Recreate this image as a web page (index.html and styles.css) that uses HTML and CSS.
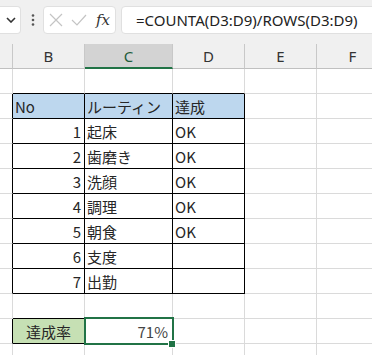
FILE: index.html
```html
<!DOCTYPE html>
<html lang="ja">
<head>
    <meta charset="UTF-8">
    <title>達成率</title>
    <link rel="stylesheet" href="styles.css">
</head>
<body>
    <div class="toolbar">
        <div class="namebox">
            <svg width="10" height="6" viewBox="0 0 10 6"><path d="M1 1l4 4 4-4" fill="none" stroke="#333" stroke-width="1.6"/></svg>
        </div>
        <svg class="dots" width="4" height="12" viewBox="0 0 4 12"><circle cx="2" cy="1.5" r="1.3" fill="#555"/><circle cx="2" cy="6" r="1.3" fill="#555"/><circle cx="2" cy="10.5" r="1.3" fill="#555"/></svg>
        <div class="fxbox">
            <svg width="14" height="14" viewBox="0 0 14 14"><path d="M1 1l12 12M13 1L1 13" stroke="#c4c4c4" stroke-width="1.2"/></svg>
            <svg width="16" height="12" viewBox="0 0 16 12"><path d="M1 6l5 5L15 1" fill="none" stroke="#c4c4c4" stroke-width="1.2"/></svg>
            <span class="fx">fx</span>
        </div>
        <div class="formula">=COUNTA(D3:D9)/ROWS(D3:D9)</div>
    </div>

    <div class="sheet">
        <!-- column headers -->
        <div class="hd"></div>
        <div class="hd">B</div>
        <div class="hd active">C</div>
        <div class="hd">D</div>
        <div class="hd">E</div>
        <div class="hd">F</div>

        <!-- row 1 -->
        <div class="c"></div>
        <div class="c bb"></div>
        <div class="c bb"></div>
        <div class="c bb"></div>
        <div class="c"></div>
        <div class="c"></div>

        <!-- row 2 -->
        <div class="c br"></div>
        <div class="c br bb blue">No</div>
        <div class="c br bb blue">ルーティン</div>
        <div class="c br bb blue">達成</div>
        <div class="c"></div>
        <div class="c"></div>

        <div class="c br"></div>
        <div class="c br bb num">1</div>
        <div class="c br bb">起床</div>
        <div class="c br bb">OK</div>
        <div class="c"></div>
        <div class="c"></div>

        <div class="c br"></div>
        <div class="c br bb num">2</div>
        <div class="c br bb">歯磨き</div>
        <div class="c br bb">OK</div>
        <div class="c"></div>
        <div class="c"></div>

        <div class="c br"></div>
        <div class="c br bb num">3</div>
        <div class="c br bb">洗顔</div>
        <div class="c br bb">OK</div>
        <div class="c"></div>
        <div class="c"></div>

        <div class="c br"></div>
        <div class="c br bb num">4</div>
        <div class="c br bb">調理</div>
        <div class="c br bb">OK</div>
        <div class="c"></div>
        <div class="c"></div>

        <div class="c br"></div>
        <div class="c br bb num">5</div>
        <div class="c br bb">朝食</div>
        <div class="c br bb">OK</div>
        <div class="c"></div>
        <div class="c"></div>

        <div class="c br"></div>
        <div class="c br bb num">6</div>
        <div class="c br bb">支度</div>
        <div class="c br bb"></div>
        <div class="c"></div>
        <div class="c"></div>

        <div class="c br"></div>
        <div class="c br bb num">7</div>
        <div class="c br bb">出勤</div>
        <div class="c br bb"></div>
        <div class="c"></div>
        <div class="c"></div>

        <!-- row 10 -->
        <div class="c"></div>
        <div class="c bb"></div>
        <div class="c"></div>
        <div class="c"></div>
        <div class="c"></div>
        <div class="c"></div>

        <!-- row 11 -->
        <div class="c br"></div>
        <div class="c br bb green center">達成率</div>
        <div class="c num sel">71%</div>
        <div class="c"></div>
        <div class="c"></div>
        <div class="c"></div>

        <!-- row 12 -->
        <div class="c"></div>
        <div class="c"></div>
        <div class="c"></div>
        <div class="c"></div>
        <div class="c"></div>
        <div class="c"></div>
    </div>
</body>
</html>
```

FILE: styles.css
```css
body {
    margin: 0;
    width: 372px;
    height: 355px;
    overflow: hidden;
    background: #fff;
    font-family: 'Noto Sans CJK JP', sans-serif;
    color: #262626;
}

.toolbar {
    height: 44px;
    background: #f0f0f0;
    display: flex;
    align-items: flex-start;
    padding-top: 6px;
    box-sizing: border-box;
}

.namebox, .fxbox, .formula {
    height: 28px;
    background: #fff;
    border: 1px solid #e0e0e0;
    border-radius: 4px;
    box-sizing: border-box;
    display: flex;
    align-items: center;
}

.namebox {
    width: 30px;
    margin-left: -9px;
    border-left: none;
    border-radius: 0 4px 4px 0;
    justify-content: flex-end;
    padding-right: 4px;
}

.dots {
    margin: 8px 0 0 10px;
}

.fxbox {
    width: 73px;
    margin-left: 8px;
    padding-left: 5px;
    gap: 8px;
}

.fx {
    font-family: 'DejaVu Serif', serif;
    font-style: italic;
    font-size: 15px;
    color: #333;
    margin-left: 1px;
}

.formula {
    flex: 1;
    margin-left: 5px;
    margin-right: -10px;
    padding-left: 14px;
    font-family: 'Noto Sans', sans-serif;
    font-size: 15px;
    color: #222;
    white-space: nowrap;
}

.sheet {
    display: grid;
    grid-template-columns: 13px 72px 88px 72px 72px 72px;
    grid-auto-rows: 25px;
}

.hd {
    background: #f0f0f0;
    border-right: 1px solid #c8c8c8;
    border-bottom: 1px solid #c0c0c0;
    box-sizing: border-box;
    text-align: center;
    font-family: 'Noto Sans', sans-serif;
    font-size: 15px;
    line-height: 24px;
    color: #333;
}

.hd.active {
    background: #d3d3d3;
    border-bottom: 2px solid #217346;
    color: #1e5c3a;
}

.c {
    border-right: 1px solid #dadada;
    border-bottom: 1px solid #dadada;
    box-sizing: border-box;
    font-size: 15px;
    line-height: 25px;
    padding-left: 2px;
    white-space: nowrap;
}

.br {
    border-right-color: #000;
}

.bb {
    border-bottom-color: #000;
}

.blue {
    background: #bdd7ee;
}

.green {
    background: #c6e0b4;
}

.num {
    text-align: right;
    padding: 0 3px 0 0;
}

.center {
    text-align: center;
    padding: 0;
}

.sel {
    position: relative;
    padding-right: 4px;
    color: #444;
}

.sel::after {
    content: "";
    position: absolute;
    left: -1px;
    top: -2px;
    right: -2px;
    bottom: -2px;
    border: 2px solid #217346;
}

.sel::before {
    content: "";
    position: absolute;
    right: -4px;
    bottom: -5px;
    width: 6px;
    height: 6px;
    background: #217346;
    border: 1px solid #fff;
    z-index: 1;
}
```
